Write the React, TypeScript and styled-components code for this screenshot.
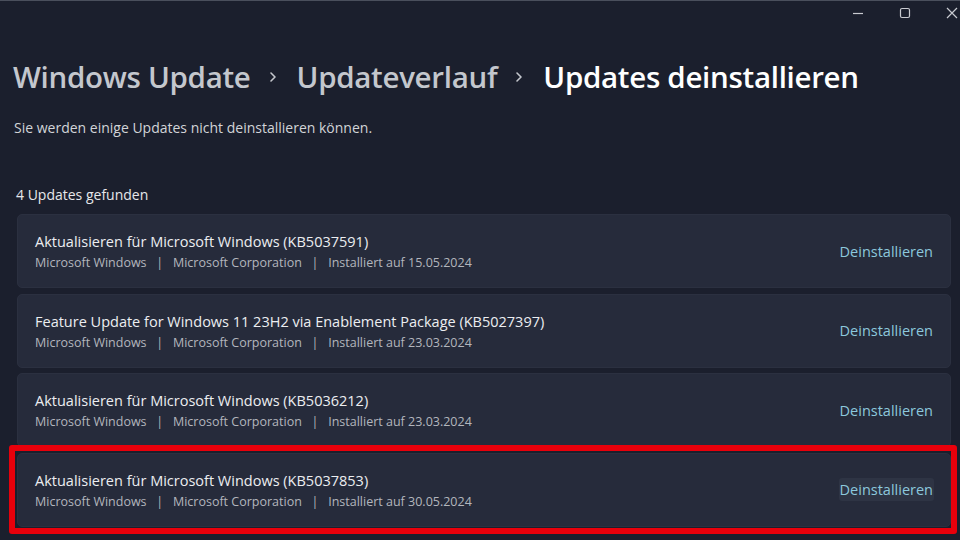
import React from 'react';
import styled, { createGlobalStyle } from 'styled-components';

type UpdateItem = {
  name: string;
  date: string;
  highlighted?: boolean;
};

const updates: UpdateItem[] = [
  { name: 'Aktualisieren für Microsoft Windows (KB5037591)', date: '15.05.2024' },
  { name: 'Feature Update for Windows 11 23H2 via Enablement Package (KB5027397)', date: '23.03.2024' },
  { name: 'Aktualisieren für Microsoft Windows (KB5036212)', date: '23.03.2024' },
  { name: 'Aktualisieren für Microsoft Windows (KB5037853)', date: '30.05.2024', highlighted: true },
];

const GlobalStyle = createGlobalStyle`
  html, body {
    margin: 0;
    padding: 0;
    background: #1b1f2d;
    font-family: 'Segoe UI', 'Open Sans', sans-serif;
  }
`;

const Window = styled.div`
  width: 960px;
  height: 540px;
  box-sizing: border-box;
  background: #1b1f2d;
  border-top: 1px solid #4a4f5c;
  overflow: hidden;
  display: flex;
  flex-direction: column;
`;

const TitleBar = styled.div`
  height: 24px;
  margin-right: -15px;
  display: flex;
  justify-content: flex-end;
  align-items: center;
`;

const WinButton = styled.div`
  width: 47px;
  height: 24px;
  display: flex;
  align-items: center;
  justify-content: center;
  color: #c8cad0;
`;

const Content = styled.div`
  padding: 0 5px 0 13px;
  display: flex;
  flex-direction: column;
`;

const Breadcrumb = styled.h1`
  margin: 32px 0 0;
  display: flex;
  align-items: center;
  font-size: 29.5px;
  font-weight: 600;
  letter-spacing: -0.3px;
  line-height: 40px;
`;

const Crumb = styled.span<{ $current?: boolean }>`
  color: ${p => (p.$current ? '#ffffff' : '#c4c7cd')};
`;

const Chevron = styled.span`
  display: flex;
  width: 46px;
  justify-content: center;
  padding-right: 2px;
  box-sizing: border-box;
  color: #c4c7cd;
`;

const Note = styled.p`
  margin: 21px 0 0 1px;
  font-size: 14px;
  color: #d2d4d8;
`;

const Count = styled.p`
  margin: 48px 0 0 3px;
  font-size: 14px;
  font-weight: 500;
  color: #e6e7ea;
`;

const List = styled.div`
  margin-top: 10px;
  display: flex;
  flex-direction: column;
  gap: 5.5px;
`;

const Highlight = styled.div<{ $on?: boolean }>`
  margin: ${p => (p.$on ? '-7.5px -2px 0 -4px' : '0 4px 0 4px')};
  border: ${p => (p.$on ? '6px solid #e8000b' : 'none')};
  border-radius: 3px;
  padding: ${p => (p.$on ? '1.5px 0 1px 2px' : '0')};
`;

const Card = styled.div`
  height: 74px;
  box-sizing: border-box;
  background: #262b3b;
  border-radius: 5px;
  border: 1px solid #2b3040;
  display: flex;
  align-items: center;
  justify-content: space-between;
  padding: 0 16px 0 17px;
`;

const Info = styled.div`
  display: flex;
  flex-direction: column;
  gap: 2px;
  padding-top: 2px;
`;

const Name = styled.div`
  font-size: 14.5px;
  color: #eceef1;
  line-height: 20px;
`;

const Meta = styled.div`
  font-size: 12.5px;
  color: #b3b6bd;
  line-height: 18px;
  white-space: pre;
`;

const Action = styled.button<{ $hover?: boolean }>`
  border: none;
  background: ${p => (p.$hover ? '#2e3444' : 'transparent')};
  border-radius: 3px;
  color: #8cc8dc;
  font-family: inherit;
  font-size: 14.5px;
  padding: 2px 1px;
  margin-right: 0;
  cursor: pointer;
`;

const ChevronIcon = () => (
  <svg width="10" height="14" viewBox="0 0 10 14">
    <path d="M3 3l4 4-4 4" fill="none" stroke="currentColor" strokeWidth="1.6" strokeLinecap="round" strokeLinejoin="round" />
  </svg>
);

export default function App() {
  return (
    <>
      <GlobalStyle />
      <Window>
        <TitleBar>
          <WinButton>
            <svg width="12" height="12" viewBox="0 0 12 12">
              <path d="M1 6.5h10" stroke="currentColor" strokeWidth="1.2" />
            </svg>
          </WinButton>
          <WinButton>
            <svg width="12" height="12" viewBox="0 0 12 12">
              <rect x="1.5" y="1.5" width="9" height="9" rx="1.5" fill="none" stroke="currentColor" strokeWidth="1.2" />
            </svg>
          </WinButton>
          <WinButton>
            <svg width="12" height="12" viewBox="0 0 12 12">
              <path d="M1 1l10 10M11 1L1 11" stroke="currentColor" strokeWidth="1.2" />
            </svg>
          </WinButton>
        </TitleBar>
        <Content>
          <Breadcrumb>
            <Crumb>Windows Update</Crumb>
            <Chevron>
              <ChevronIcon />
            </Chevron>
            <Crumb>Updateverlauf</Crumb>
            <Chevron>
              <ChevronIcon />
            </Chevron>
            <Crumb $current>Updates deinstallieren</Crumb>
          </Breadcrumb>
          <Note>Sie werden einige Updates nicht deinstallieren können.</Note>
          <Count>4 Updates gefunden</Count>
          <List>
            {updates.map(u => (
              <Highlight key={u.name} $on={u.highlighted}>
                <Card>
                  <Info>
                    <Name>{u.name}</Name>
                    <Meta>{`Microsoft Windows   |   Microsoft Corporation   |   Installiert auf ${u.date}`}</Meta>
                  </Info>
                  <Action $hover={u.highlighted}>Deinstallieren</Action>
                </Card>
              </Highlight>
            ))}
          </List>
        </Content>
      </Window>
    </>
  );
}
